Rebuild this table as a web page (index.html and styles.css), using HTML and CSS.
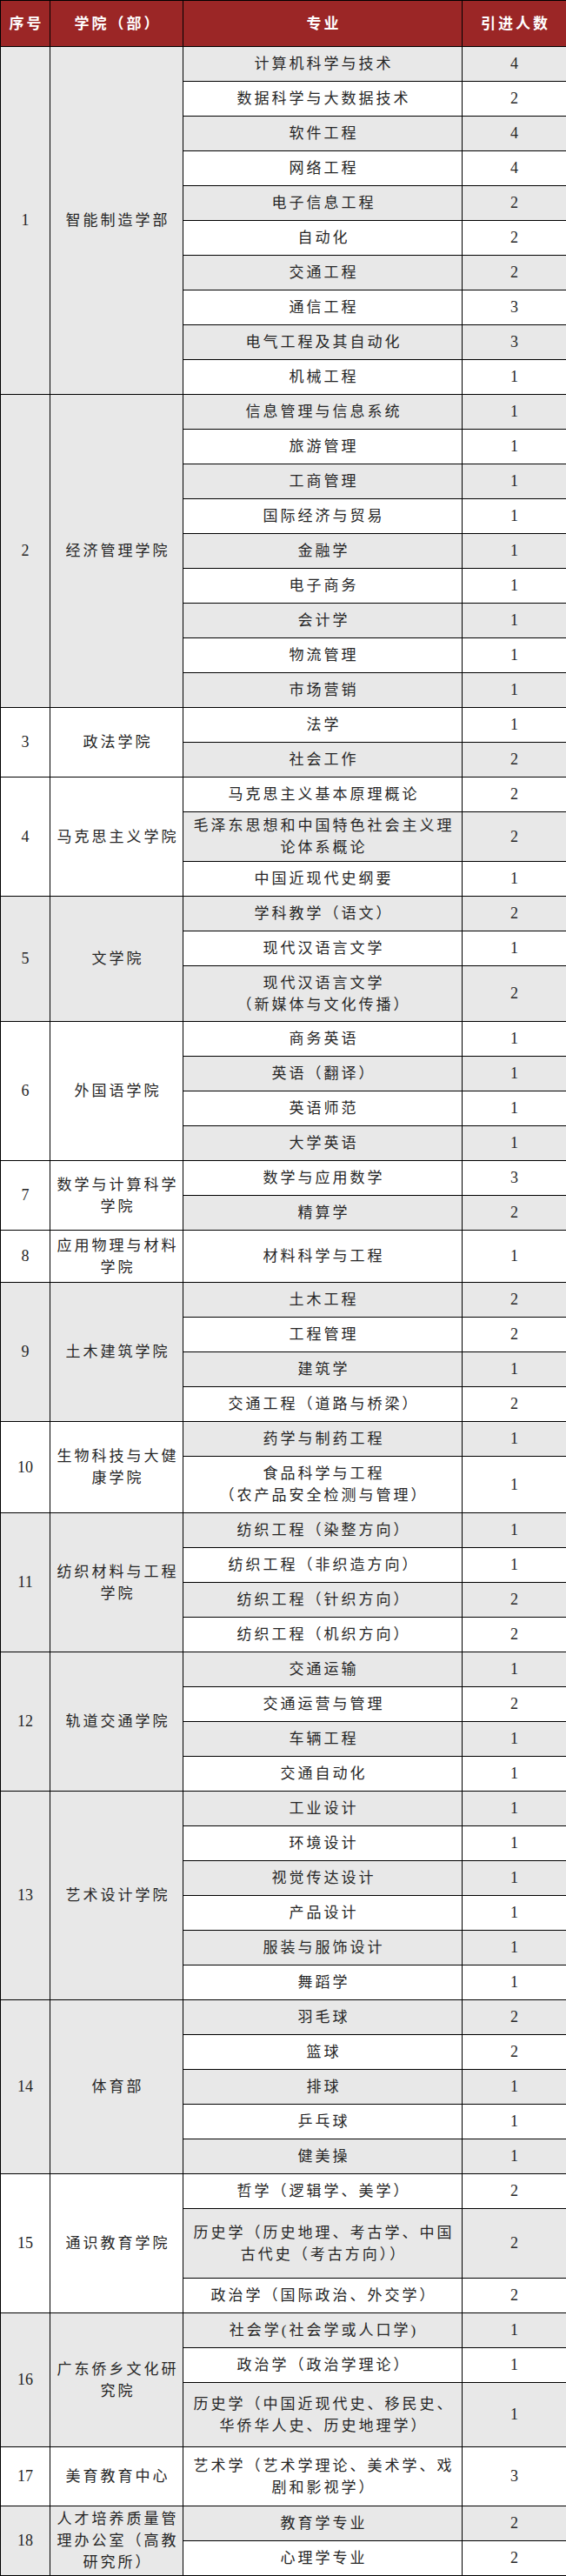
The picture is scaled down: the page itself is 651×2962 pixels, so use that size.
FILE: index.html
```html
<!DOCTYPE html>
<html lang="zh-CN">
<head>
<meta charset="utf-8">
<title>引进人数</title>
<link rel="stylesheet" href="styles.css">
</head>
<body>
<table class="tbl">
<colgroup><col class="c1"><col class="c2"><col class="c3"><col class="c4"></colgroup>
<thead>
<tr class="hd"><th class="t">序号</th><th class="t">学院（部）</th><th class="t">专业</th><th class="t">引进人数</th></tr>
</thead>
<tbody>
<tr class="h40"><td class="n g" rowspan="10">1</td><td class="t g" rowspan="10">智能制造学部</td><td class="t g">计算机科学与技术</td><td class="n g">4</td></tr>
<tr class="h40"><td class="t">数据科学与大数据技术</td><td class="n">2</td></tr>
<tr class="h40"><td class="t g">软件工程</td><td class="n g">4</td></tr>
<tr class="h40"><td class="t">网络工程</td><td class="n">4</td></tr>
<tr class="h40"><td class="t g">电子信息工程</td><td class="n g">2</td></tr>
<tr class="h40"><td class="t">自动化</td><td class="n">2</td></tr>
<tr class="h40"><td class="t g">交通工程</td><td class="n g">2</td></tr>
<tr class="h40"><td class="t">通信工程</td><td class="n">3</td></tr>
<tr class="h40"><td class="t g">电气工程及其自动化</td><td class="n g">3</td></tr>
<tr class="h40"><td class="t">机械工程</td><td class="n">1</td></tr>

<tr class="h40"><td class="n g" rowspan="9">2</td><td class="t g" rowspan="9">经济管理学院</td><td class="t g">信息管理与信息系统</td><td class="n g">1</td></tr>
<tr class="h40"><td class="t">旅游管理</td><td class="n">1</td></tr>
<tr class="h40"><td class="t g">工商管理</td><td class="n g">1</td></tr>
<tr class="h40"><td class="t">国际经济与贸易</td><td class="n">1</td></tr>
<tr class="h40"><td class="t g">金融学</td><td class="n g">1</td></tr>
<tr class="h40"><td class="t">电子商务</td><td class="n">1</td></tr>
<tr class="h40"><td class="t g">会计学</td><td class="n g">1</td></tr>
<tr class="h40"><td class="t">物流管理</td><td class="n">1</td></tr>
<tr class="h40"><td class="t g">市场营销</td><td class="n g">1</td></tr>

<tr class="h40"><td class="n" rowspan="2">3</td><td class="t" rowspan="2">政法学院</td><td class="t">法学</td><td class="n">1</td></tr>
<tr class="h40"><td class="t g">社会工作</td><td class="n g">2</td></tr>

<tr class="h40"><td class="n" rowspan="3">4</td><td class="t" rowspan="3">马克思主义学院</td><td class="t">马克思主义基本原理概论</td><td class="n">2</td></tr>
<tr class="h57"><td class="t g">毛泽东思想和中国特色社会主义理<br>论体系概论</td><td class="n g">2</td></tr>
<tr class="h40"><td class="t">中国近现代史纲要</td><td class="n">1</td></tr>

<tr class="h40"><td class="n g" rowspan="3">5</td><td class="t g" rowspan="3">文学院</td><td class="t g">学科教学（语文）</td><td class="n g">2</td></tr>
<tr class="h40"><td class="t">现代汉语言文学</td><td class="n">1</td></tr>
<tr class="h64"><td class="t g">现代汉语言文学<br>（新媒体与文化传播）</td><td class="n g">2</td></tr>

<tr class="h40"><td class="n" rowspan="4">6</td><td class="t" rowspan="4">外国语学院</td><td class="t">商务英语</td><td class="n">1</td></tr>
<tr class="h40"><td class="t g">英语（翻译）</td><td class="n g">1</td></tr>
<tr class="h40"><td class="t">英语师范</td><td class="n">1</td></tr>
<tr class="h40"><td class="t g">大学英语</td><td class="n g">1</td></tr>

<tr class="h40"><td class="n" rowspan="2">7</td><td class="t" rowspan="2">数学与计算科学<br>学院</td><td class="t">数学与应用数学</td><td class="n">3</td></tr>
<tr class="h40"><td class="t g">精算学</td><td class="n g">2</td></tr>

<tr class="h60"><td class="n">8</td><td class="t">应用物理与材料<br>学院</td><td class="t">材料科学与工程</td><td class="n">1</td></tr>

<tr class="h40"><td class="n g" rowspan="4">9</td><td class="t g" rowspan="4">土木建筑学院</td><td class="t g">土木工程</td><td class="n g">2</td></tr>
<tr class="h40"><td class="t">工程管理</td><td class="n">2</td></tr>
<tr class="h40"><td class="t g">建筑学</td><td class="n g">1</td></tr>
<tr class="h40"><td class="t">交通工程（道路与桥梁）</td><td class="n">2</td></tr>

<tr class="h40"><td class="n" rowspan="2">10</td><td class="t" rowspan="2">生物科技与大健<br>康学院</td><td class="t g">药学与制药工程</td><td class="n g">1</td></tr>
<tr class="h65"><td class="t">食品科学与工程<br>（农产品安全检测与管理）</td><td class="n">1</td></tr>

<tr class="h40"><td class="n g" rowspan="4">11</td><td class="t g" rowspan="4">纺织材料与工程<br>学院</td><td class="t g">纺织工程（染整方向）</td><td class="n g">1</td></tr>
<tr class="h40"><td class="t">纺织工程（非织造方向）</td><td class="n">1</td></tr>
<tr class="h40"><td class="t g">纺织工程（针织方向）</td><td class="n g">2</td></tr>
<tr class="h40"><td class="t">纺织工程（机织方向）</td><td class="n">2</td></tr>

<tr class="h40"><td class="n g" rowspan="4">12</td><td class="t g" rowspan="4">轨道交通学院</td><td class="t g">交通运输</td><td class="n g">1</td></tr>
<tr class="h40"><td class="t">交通运营与管理</td><td class="n">2</td></tr>
<tr class="h40"><td class="t g">车辆工程</td><td class="n g">1</td></tr>
<tr class="h40"><td class="t">交通自动化</td><td class="n">1</td></tr>

<tr class="h40"><td class="n g" rowspan="6">13</td><td class="t g" rowspan="6">艺术设计学院</td><td class="t g">工业设计</td><td class="n g">1</td></tr>
<tr class="h40"><td class="t">环境设计</td><td class="n">1</td></tr>
<tr class="h40"><td class="t g">视觉传达设计</td><td class="n g">1</td></tr>
<tr class="h40"><td class="t">产品设计</td><td class="n">1</td></tr>
<tr class="h40"><td class="t g">服装与服饰设计</td><td class="n g">1</td></tr>
<tr class="h40"><td class="t">舞蹈学</td><td class="n">1</td></tr>

<tr class="h40"><td class="n g" rowspan="5">14</td><td class="t g" rowspan="5">体育部</td><td class="t g">羽毛球</td><td class="n g">2</td></tr>
<tr class="h40"><td class="t">篮球</td><td class="n">2</td></tr>
<tr class="h40"><td class="t g">排球</td><td class="n g">1</td></tr>
<tr class="h40"><td class="t">乒乓球</td><td class="n">1</td></tr>
<tr class="h40"><td class="t g">健美操</td><td class="n g">1</td></tr>

<tr class="h40"><td class="n" rowspan="3">15</td><td class="t" rowspan="3">通识教育学院</td><td class="t">哲学（逻辑学、美学）</td><td class="n">2</td></tr>
<tr class="h80"><td class="t g">历史学（历史地理、考古学、中国<br>古代史（考古方向））</td><td class="n g">2</td></tr>
<tr class="h40"><td class="t">政治学（国际政治、外交学）</td><td class="n">2</td></tr>

<tr class="h40"><td class="n g" rowspan="3">16</td><td class="t g" rowspan="3">广东侨乡文化研<br>究院</td><td class="t g">社会学(社会学或人口学)</td><td class="n g">1</td></tr>
<tr class="h40"><td class="t">政治学（政治学理论）</td><td class="n">1</td></tr>
<tr class="h74"><td class="t g">历史学（中国近现代史、移民史、<br>华侨华人史、历史地理学）</td><td class="n g">1</td></tr>

<tr class="h68"><td class="n">17</td><td class="t">美育教育中心</td><td class="t">艺术学（艺术学理论、美术学、戏<br>剧和影视学）</td><td class="n">3</td></tr>

<tr class="h40"><td class="n g" rowspan="2">18</td><td class="t g" rowspan="2">人才培养质量管<br>理办公室（高教<br>研究所）</td><td class="t g">教育学专业</td><td class="n g">2</td></tr>
<tr class="h40"><td class="t">心理学专业</td><td class="n">2</td></tr>
</tbody>
</table>
</body>
</html>
```

FILE: styles.css
```css
html, body {
  margin: 0;
  padding: 0;
  background: #ffffff;
}

.tbl {
  width: 651px;
  border-collapse: collapse;
  table-layout: fixed;
  font-family: "Liberation Serif", "Noto Sans CJK SC", serif;
  color: #262626;
}

.c1 { width: 57px; }
.c2 { width: 153px; }
.c3 { width: 321px; }
.c4 { width: 120px; }

.tbl th,
.tbl td {
  border: 1px solid #000000;
  padding: 0 4px;
  text-align: center;
  vertical-align: middle;
  line-height: 25px;
  white-space: nowrap;
  overflow: hidden;
}

.tbl th {
  background: #9b2626;
  color: #ffffff;
  font-weight: bold;
  font-size: 17px;
}

.hd { height: 53px; }

.t {
  font-size: 17px;
  letter-spacing: 3px;
  padding-left: 7px !important;
}

.n {
  font-size: 18px;
}

.g { background: #e8e8e8; }

.h40 { height: 40px; }
.h57 { height: 57px; }
.h60 { height: 60px; }
.h64 { height: 64px; }
.h65 { height: 65px; }
.h68 { height: 68px; }
.h74 { height: 74px; }
.h80 { height: 80px; }
```
